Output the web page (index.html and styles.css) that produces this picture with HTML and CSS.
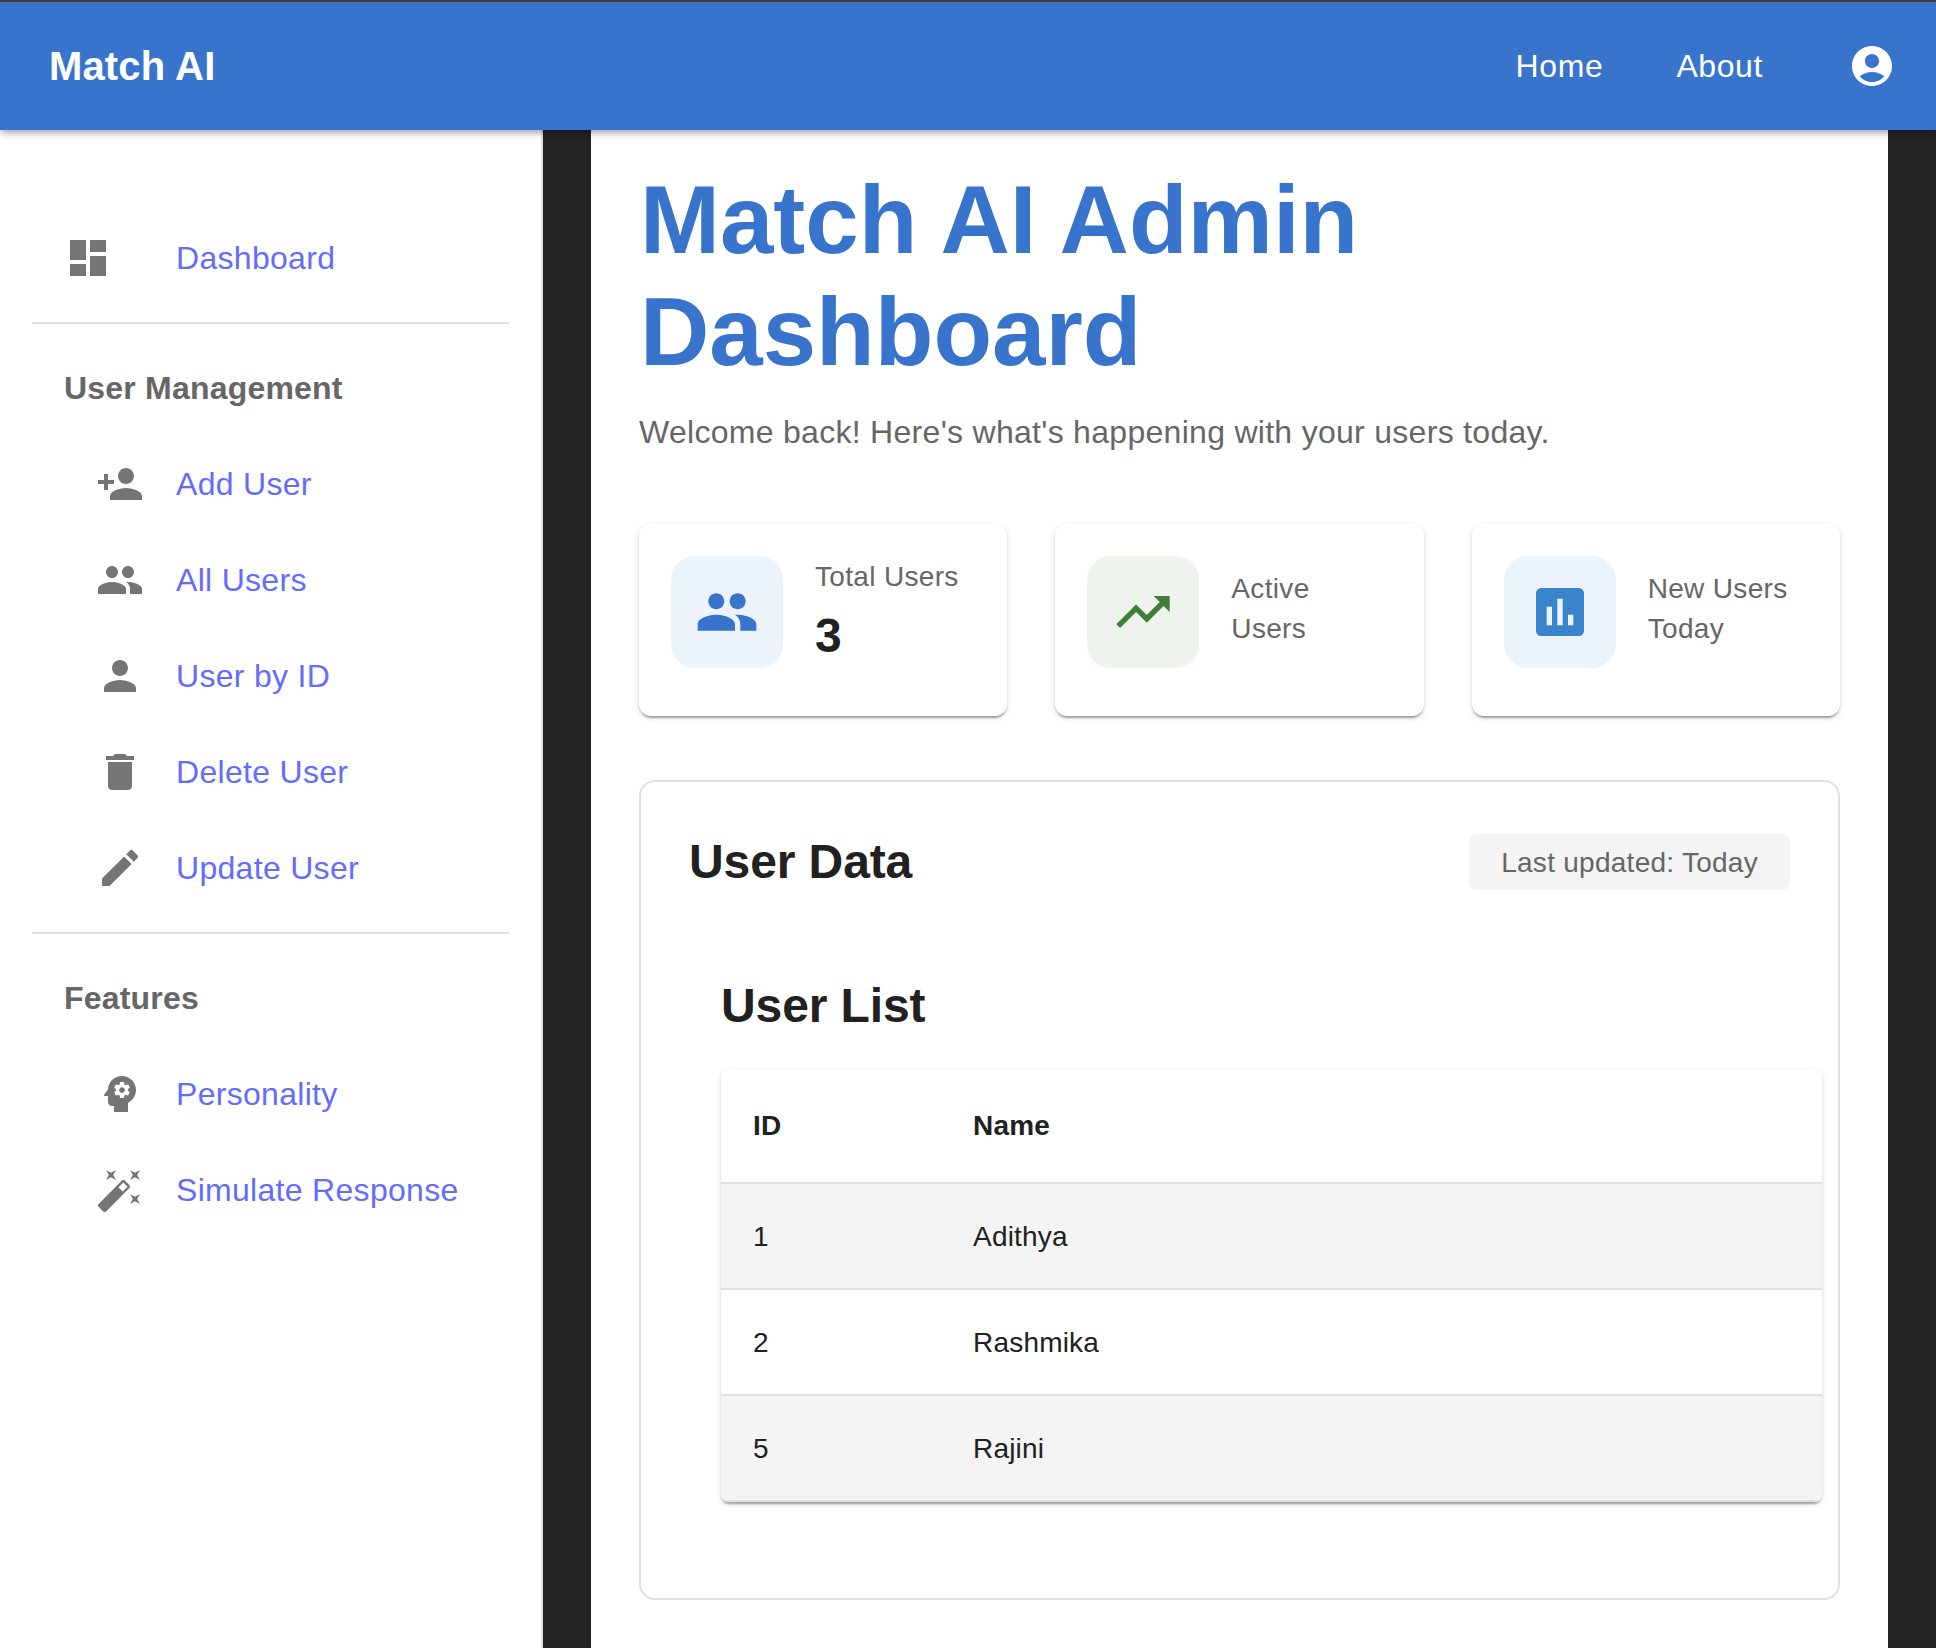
FILE: index.html
```html
<!DOCTYPE html>
<html lang="en">

<head>
    <meta charset="UTF-8">
    <meta name="viewport" content="width=device-width, initial-scale=1.0">
    <title>Match AI</title>
    <link rel="stylesheet" href="styles.css">
</head>

<body>
    <header class="app-bar">
        <div class="brand">Match AI</div>
        <nav class="top-nav">
            <a href="#">Home</a>
            <a href="#">About</a>
        </nav>
        <svg class="account-icon" viewBox="0 0 24 24"><path d="M12 2C6.48 2 2 6.48 2 12s4.48 10 10 10 10-4.48 10-10S17.52 2 12 2zm0 4c1.93 0 3.5 1.57 3.5 3.5S13.93 13 12 13s-3.5-1.57-3.5-3.5S10.07 6 12 6zm0 14c-2.03 0-4.43-.82-6.14-2.88C7.55 15.8 9.68 15 12 15s4.45.8 6.14 2.12C16.43 19.18 14.03 20 12 20z"/></svg>
    </header>

    <div class="layout">
        <aside class="sidebar">
            <a class="side-item side-top" href="#">
                <svg class="side-icon" viewBox="0 0 24 24"><path d="M3 13h8V3H3v10zm0 8h8v-6H3v6zm10 0h8V11h-8v10zm0-18v6h8V3h-8z"/></svg>
                <span>Dashboard</span>
            </a>
            <hr class="side-divider">

            <div class="side-heading">User Management</div>
            <a class="side-item side-nested" href="#">
                <svg class="side-icon" viewBox="0 0 24 24"><path d="M15 12c2.21 0 4-1.79 4-4s-1.79-4-4-4-4 1.79-4 4 1.79 4 4 4zm-9-2V7H4v3H1v2h3v3h2v-3h3v-2H6zm9 4c-2.67 0-8 1.34-8 4v2h16v-2c0-2.66-5.33-4-8-4z"/></svg>
                <span>Add User</span>
            </a>
            <a class="side-item side-nested" href="#">
                <svg class="side-icon" viewBox="0 0 24 24"><path d="M16 11c1.66 0 2.99-1.34 2.99-3S17.66 5 16 5c-1.66 0-3 1.34-3 3s1.34 3 3 3zm-8 0c1.66 0 2.99-1.34 2.99-3S9.66 5 8 5C6.34 5 5 6.34 5 8s1.34 3 3 3zm0 2c-2.33 0-7 1.17-7 3.5V19h14v-2.5c0-2.33-4.67-3.5-7-3.5zm8 0c-.29 0-.62.02-.97.05 1.16.84 1.97 1.97 1.97 3.45V19h6v-2.5c0-2.33-4.67-3.5-7-3.5z"/></svg>
                <span>All Users</span>
            </a>
            <a class="side-item side-nested" href="#">
                <svg class="side-icon" viewBox="0 0 24 24"><path d="M12 12c2.21 0 4-1.79 4-4s-1.79-4-4-4-4 1.79-4 4 1.79 4 4 4zm0 2c-2.67 0-8 1.34-8 4v2h16v-2c0-2.66-5.33-4-8-4z"/></svg>
                <span>User by ID</span>
            </a>
            <a class="side-item side-nested" href="#">
                <svg class="side-icon" viewBox="0 0 24 24"><path d="M6 19c0 1.1.9 2 2 2h8c1.1 0 2-.9 2-2V7H6v12zM19 4h-3.5l-1-1h-5l-1 1H5v2h14V4z"/></svg>
                <span>Delete User</span>
            </a>
            <a class="side-item side-nested" href="#">
                <svg class="side-icon" viewBox="0 0 24 24"><path d="M3 17.25V21h3.75L17.81 9.94l-3.75-3.75L3 17.25zM20.71 7.04c.39-.39.39-1.02 0-1.41l-2.34-2.34a.9959.9959 0 0 0-1.41 0l-1.83 1.83 3.75 3.75 1.83-1.83z"/></svg>
                <span>Update User</span>
            </a>
            <hr class="side-divider">

            <div class="side-heading">Features</div>
            <a class="side-item side-nested" href="#">
                <svg class="side-icon" viewBox="0 0 24 24"><path d="M13 8.57c-.79 0-1.43.64-1.43 1.43s.64 1.43 1.43 1.43 1.43-.64 1.43-1.43-.64-1.43-1.43-1.43z"/><path d="M13 3C9.25 3 6.2 5.94 6.02 9.64L4.1 12.2c-.25.33-.01.8.4.8H6v3c0 1.1.9 2 2 2h1v3h7v-4.68c2.36-1.12 4-3.53 4-6.32 0-3.87-3.13-7-7-7zm3 7c0 .13-.01.26-.03.39l.83.66c.08.06.1.16.05.25l-.8 1.39c-.05.09-.16.12-.24.09l-.99-.4c-.21.16-.43.29-.67.39L14 13.83c-.01.1-.1.17-.2.17h-1.6c-.1 0-.18-.07-.2-.17l-.15-1.06c-.25-.1-.47-.23-.68-.39l-.99.4c-.09.03-.2 0-.25-.09l-.8-1.39c-.05-.08-.03-.19.05-.25l.84-.66c-.02-.13-.03-.26-.03-.39s.02-.27.04-.39l-.85-.66c-.08-.06-.1-.16-.05-.26l.8-1.38c.05-.09.15-.12.24-.09l1 .4c.2-.15.43-.29.67-.39L12 6.17c.02-.1.1-.17.2-.17h1.6c.1 0 .18.07.2.17l.15 1.06c.24.1.46.23.67.39l1-.4c.09-.03.2 0 .24.09l.8 1.38c.05.09.03.2-.05.26l-.85.66c.03.12.04.25.04.39z"/></svg>
                <span>Personality</span>
            </a>
            <a class="side-item side-nested" href="#">
                <svg class="side-icon" viewBox="0 0 24 24"><path d="M7.5 5.6 10 7 8.6 4.5 10 2 7.5 3.4 5 2l1.4 2.5L5 7zm12 9.8L17 14l1.4 2.5L17 19l2.5-1.4L22 19l-1.4-2.5L22 14zM22 2l-2.5 1.4L17 2l1.4 2.5L17 7l2.5-1.4L22 7l-1.4-2.5zm-7.63 5.29a.9959.9959 0 0 0-1.41 0L1.29 18.96c-.39.39-.39 1.02 0 1.41l2.34 2.34c.39.39 1.02.39 1.41 0L16.7 11.05c.39-.39.39-1.02 0-1.41l-2.33-2.35zm-1.03 5.49-2.12-2.12 2.44-2.44 2.12 2.12-2.44 2.44z"/></svg>
                <span>Simulate Response</span>
            </a>
        </aside>

        <main class="content">
            <h1 class="page-title">Match AI Admin Dashboard</h1>
            <p class="page-subtitle">Welcome back! Here's what's happening with your users today.</p>

            <section class="stats">
                <div class="stat-card">
                    <div class="stat-icon stat-icon-blue">
                        <svg class="people-icon" viewBox="0 0 24 24"><path d="M16 11c1.66 0 2.99-1.34 2.99-3S17.66 5 16 5c-1.66 0-3 1.34-3 3s1.34 3 3 3zm-8 0c1.66 0 2.99-1.34 2.99-3S9.66 5 8 5C6.34 5 5 6.34 5 8s1.34 3 3 3zm0 2c-2.33 0-7 1.17-7 3.5V19h14v-2.5c0-2.33-4.67-3.5-7-3.5zm8 0c-.29 0-.62.02-.97.05 1.16.84 1.97 1.97 1.97 3.45V19h6v-2.5c0-2.33-4.67-3.5-7-3.5z"/></svg>
                    </div>
                    <div>
                        <div class="stat-label stat-label-top">Total Users</div>
                        <div class="stat-value">3</div>
                    </div>
                </div>
                <div class="stat-card">
                    <div class="stat-icon stat-icon-green">
                        <svg class="trend-icon" viewBox="0 0 24 24"><path d="m16 6 2.29 2.29-4.88 4.88-4-4L2 16.59 3.41 18l6-6 4 4 6.3-6.29L22 12V6z"/></svg>
                    </div>
                    <div class="stat-label">Active Users</div>
                </div>
                <div class="stat-card">
                    <div class="stat-icon stat-icon-blue">
                        <svg class="chart-icon" viewBox="0 0 24 24"><path d="M19 3H5c-1.1 0-2 .9-2 2v14c0 1.1.9 2 2 2h14c1.1 0 2-.9 2-2V5c0-1.1-.9-2-2-2zM9 17H7v-7h2v7zm4 0h-2V7h2v10zm4 0h-2v-4h2v4z"/></svg>
                    </div>
                    <div class="stat-label">New Users Today</div>
                </div>
            </section>

            <section class="data-panel">
                <div class="panel-head">
                    <h2 class="panel-title">User Data</h2>
                    <span class="updated-chip">Last updated: Today</span>
                </div>

                <div class="user-list">
                    <h2 class="panel-title">User List</h2>
                    <div class="table-wrap">
                        <table class="user-table">
                            <thead>
                                <tr>
                                    <th class="col-id">ID</th>
                                    <th>Name</th>
                                </tr>
                            </thead>
                            <tbody>
                                <tr>
                                    <td>1</td>
                                    <td>Adithya</td>
                                </tr>
                                <tr>
                                    <td>2</td>
                                    <td>Rashmika</td>
                                </tr>
                                <tr>
                                    <td>5</td>
                                    <td>Rajini</td>
                                </tr>
                            </tbody>
                        </table>
                    </div>
                </div>
            </section>
        </main>
    </div>
</body>

</html>
```

FILE: styles.css
```css
* {
    box-sizing: border-box;
}

html,
body {
    height: 100%;
}

body {
    margin: 0;
    display: flex;
    flex-direction: column;
    overflow: hidden;
    background-color: #242424;
    font-family: "Liberation Sans", Arial, sans-serif;
    color: #212121;
}

a {
    text-decoration: none;
}

/* top bar */
.app-bar {
    position: relative;
    z-index: 2;
    flex: none;
    height: 130px;
    display: flex;
    align-items: center;
    padding: 0 40px 0 49px;
    border-top: 2px solid #3d3d3d;
    background-color: #3874cb;
    box-shadow: 0 4px 8px -2px rgba(0, 0, 0, 0.2), 0 2px 6px rgba(0, 0, 0, 0.14), 0 2px 12px rgba(0, 0, 0, 0.12);
    color: #fff;
}

.brand {
    flex: 1;
    font-size: 40px;
    font-weight: bold;
    letter-spacing: 0.15px;
}

.top-nav {
    display: flex;
    gap: 73px;
    margin-right: 85px;
}

.top-nav a {
    font-size: 32px;
    letter-spacing: 0.6px;
    color: #fff;
}

.account-icon {
    width: 48px;
    height: 48px;
    fill: #fff;
}

.layout {
    flex: 1;
    display: flex;
    min-height: 0;
}

/* sidebar */
.sidebar {
    flex: none;
    width: 543px;
    padding-top: 80px;
    border-right: 2px solid #e0e0e0;
    background-color: #fff;
}

.side-item {
    display: flex;
    align-items: center;
    height: 96px;
    font-size: 32px;
    line-height: 48px;
    letter-spacing: 0.3px;
    color: #646cff;
}

.side-top {
    padding-left: 64px;
}

.side-top .side-icon {
    margin-right: 64px;
}

.side-nested {
    padding-left: 96px;
}

.side-nested .side-icon {
    margin-right: 32px;
}

.side-icon {
    flex: none;
    width: 48px;
    height: 48px;
    fill: #757575;
}

.side-divider {
    height: 2px;
    margin: 16px 32px 0;
    border: 0;
    background-color: #e0e0e0;
}

.side-heading {
    height: 112px;
    padding: 32px 64px 16px;
    font-size: 32px;
    font-weight: bold;
    line-height: 64px;
    letter-spacing: 0.2px;
    color: #666;
}

/* main column */
.content {
    flex: 1;
    min-width: 0;
    margin: 0 48px;
    padding: 34px 48px 0;
    background-color: #fff;
}

.page-title {
    margin: 0 0 0 1px;
    font-size: 96px;
    font-weight: bold;
    line-height: 112px;
    color: #3874cb;
}

.page-subtitle {
    margin: 20px 0 0;
    font-size: 32px;
    line-height: 48px;
    letter-spacing: 0.29px;
    color: #666;
}

/* stat cards */
.stats {
    display: grid;
    grid-template-columns: repeat(3, 1fr);
    gap: 48px;
    margin-top: 68px;
}

.stat-card {
    height: 192px;
    display: flex;
    align-items: flex-start;
    gap: 32px;
    padding: 32px 48px 48px 32px;
    border-radius: 12px;
    background-color: #fff;
    box-shadow: 0 4px 2px -2px rgba(0, 0, 0, 0.2), 0 2px 2px rgba(0, 0, 0, 0.14), 0 2px 6px rgba(0, 0, 0, 0.12);
}

.stat-icon {
    flex: none;
    width: 112px;
    height: 112px;
    display: flex;
    align-items: center;
    justify-content: center;
    border-radius: 24px;
}

.stat-icon svg {
    width: 64px;
    height: 64px;
}

.stat-icon-blue {
    background-color: #edf3fb;
}

.stat-icon-green {
    background-color: #eef3ee;
}

.people-icon {
    fill: #3874cb;
}

.trend-icon {
    fill: #3f7d38;
}

.chart-icon {
    fill: #3a84cb;
}

.stat-card > .stat-label {
    align-self: center;
    padding-bottom: 7px;
}

.stat-label {
    font-size: 28px;
    line-height: 40px;
    letter-spacing: 0.33px;
    color: #666;
}

.stat-label-top {
    margin-top: 1px;
}

.stat-value {
    margin-top: 7px;
    font-size: 48px;
    font-weight: bold;
    line-height: 64px;
}

/* user data panel */
.data-panel {
    margin-top: 64px;
    padding: 48px;
    border: 2px solid #e0e0e0;
    border-radius: 16px;
    background-color: #fff;
}

.panel-head {
    display: flex;
    align-items: center;
    justify-content: space-between;
}

.panel-title {
    margin: 0;
    font-size: 48px;
    font-weight: bold;
    line-height: 64px;
    letter-spacing: -0.1px;
}

.updated-chip {
    padding: 9px 32px 7px;
    border-radius: 8px;
    background-color: #f4f4f4;
    font-size: 28px;
    line-height: 40px;
    letter-spacing: 0.27px;
    color: #666;
}

.user-list {
    width: 100%;
    margin: 80px 0 48px 32px;
}

.table-wrap {
    margin-top: 32px;
    border-radius: 8px;
    overflow: hidden;
    box-shadow: 0 4px 2px -2px rgba(0, 0, 0, 0.2), 0 2px 2px rgba(0, 0, 0, 0.14), 0 2px 6px rgba(0, 0, 0, 0.12);
}

.user-table {
    width: 100%;
    border-collapse: separate;
    border-spacing: 0;
    table-layout: fixed;
    background-color: #fff;
    font-size: 28px;
    line-height: 40px;
    letter-spacing: 0.2px;
}

.col-id {
    width: 220px;
}

.user-table th,
.user-table td {
    padding: 33px 32px 31px;
    border-bottom: 2px solid #e0e0e0;
    text-align: left;
}

.user-table th {
    padding: 36px 32px;
    font-weight: bold;
}

.user-table tbody tr:nth-child(odd) {
    background-color: #f4f4f4;
}
```
